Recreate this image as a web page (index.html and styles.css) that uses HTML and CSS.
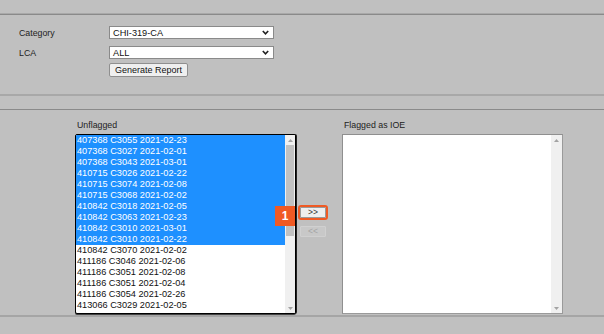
FILE: index.html
```html
<!DOCTYPE html>
<html lang="en">
<head>
<meta charset="utf-8">
<title>IOE Report</title>
<link rel="stylesheet" href="styles.css">
</head>
<body>
<div class="page">
  <div class="rule-top"></div>
  <form class="filters">
    <div class="f-row">
      <label class="f-label">Category</label>
      <div class="select"><span>CHI-319-CA</span><svg class="chev" width="7" height="5" viewBox="0 0 7 5"><path d="M0.8 1 L3.5 3.8 L6.2 1" fill="none" stroke="#222" stroke-width="1.6"/></svg></div>
    </div>
    <div class="f-row">
      <label class="f-label">LCA</label>
      <div class="select"><span>ALL</span><svg class="chev" width="7" height="5" viewBox="0 0 7 5"><path d="M0.8 1 L3.5 3.8 L6.2 1" fill="none" stroke="#222" stroke-width="1.6"/></svg></div>
    </div>
    <div class="btn-row"><button type="button" class="btn-generate">Generate Report</button></div>
  </form>
  <div class="rule-mid"></div>
  <div class="rule-thin"></div>
  <section class="transfer">
    <div class="col">
      <div class="col-label">Unflagged</div>
      <div class="listbox focused">
        <ul class="options">
          <li class="sel">407368 C3055 2021-02-23</li>
          <li class="sel">407368 C3027 2021-02-01</li>
          <li class="sel">407368 C3043 2021-03-01</li>
          <li class="sel">410715 C3026 2021-02-22</li>
          <li class="sel">410715 C3074 2021-02-08</li>
          <li class="sel">410715 C3068 2021-02-02</li>
          <li class="sel">410842 C3018 2021-02-05</li>
          <li class="sel">410842 C3063 2021-02-23</li>
          <li class="sel">410842 C3010 2021-03-01</li>
          <li class="sel">410842 C3010 2021-02-22</li>
          <li>410842 C3070 2021-02-02</li>
          <li>411186 C3046 2021-02-06</li>
          <li>411186 C3051 2021-02-08</li>
          <li>411186 C3051 2021-02-04</li>
          <li>411186 C3054 2021-02-26</li>
          <li>413066 C3029 2021-02-05</li>
        </ul>
        <div class="scrollbar">
          <div class="arrow"><svg width="5" height="3" viewBox="0 0 5 3"><path d="M0 3 L2.5 0 L5 3Z" fill="#a3a3a3"/></svg></div>
          <div class="thumb"></div>
          <div class="track"></div>
          <div class="arrow"><svg width="5" height="3" viewBox="0 0 5 3"><path d="M0 0 L2.5 3 L5 0Z" fill="#a3a3a3"/></svg></div>
        </div>
      </div>
    </div>
    <div class="mover">
      <div class="move-wrap">
        <span class="badge">1</span>
        <button type="button" class="move active">&gt;&gt;</button>
      </div>
      <button type="button" class="move" disabled>&lt;&lt;</button>
    </div>
    <div class="col">
      <div class="col-label">Flagged as IOE</div>
      <div class="listbox plain">
        <ul class="options"></ul>
        <div class="scrollbar wide">
          <div class="arrow"><svg width="5" height="3" viewBox="0 0 5 3"><path d="M0 3 L2.5 0 L5 3Z" fill="#a3a3a3"/></svg></div>
          <div class="track"></div>
          <div class="arrow"><svg width="5" height="3" viewBox="0 0 5 3"><path d="M0 0 L2.5 3 L5 0Z" fill="#a3a3a3"/></svg></div>
        </div>
      </div>
    </div>
  </section>
  <div class="rule-bottom"></div>
</div>
</body>
</html>
```
FILE: styles.css
```css
html, body {
  margin: 0;
  background: #c0c0c0;
  font-family: "Liberation Sans", Arial, sans-serif;
  color: #222;
}
.page {
  padding-top: 13px;
}
.rule-top {
  height: 0;
  border-top: 1px solid #a9a9a9;
  border-bottom: 1px solid #8a8a8a;
}
.filters {
  display: flex;
  flex-direction: column;
  padding: 11px 0 0 19px;
  margin: 0;
}
.f-row {
  display: flex;
  align-items: center;
  height: 13px;
}
.f-row + .f-row {
  margin-top: 7px;
}
.f-label {
  width: 90px;
  font-size: 8.8px;
  color: #222;
}
.select {
  width: 165px;
  height: 13px;
  box-sizing: border-box;
  background: #fff;
  border: 1px solid #8a8a8a;
  display: flex;
  align-items: center;
  justify-content: space-between;
  padding: 0 4px 0 3px;
  font-size: 9.2px;
  color: #111;
}
.chev {
  display: block;
}
.btn-row {
  margin-top: 4px;
  padding-left: 90px;
  display: flex;
}
.btn-generate {
  height: 14px;
  width: 79px;
  box-sizing: border-box;
  padding: 0;
  font-family: "Liberation Sans", Arial, sans-serif;
  font-size: 9px;
  background: #efefef;
  border: 1px solid #8f8f8f;
  border-radius: 2px;
  color: #111;
}
.rule-mid {
  margin-top: 17px;
  height: 2px;
  background: #a8a8a8;
}
.rule-thin {
  margin-top: 13px;
  height: 1px;
  background: #8a8a8a;
}
.transfer {
  display: flex;
  padding: 10px 0 0 75px;
}
.col {
  display: flex;
  flex-direction: column;
}
.col-label {
  font-size: 8.8px;
  line-height: 11px;
  height: 11px;
  margin-bottom: 3px;
  padding-left: 2px;
  color: #222;
}
.listbox {
  width: 221px;
  height: 180px;
  box-sizing: border-box;
  display: flex;
  background: #fff;
  overflow: hidden;
}
.listbox.focused {
  border: 1px solid #000;
  border-radius: 2px;
  box-shadow: 1px 0 0 #222, 0 1px 0 #444;
}
.listbox.plain {
  border: 1px solid #9a9a9a;
  border-top-color: #8f8f8f;
  border-left-color: #8f8f8f;
}
.options {
  list-style: none;
  margin: 0;
  padding: 0;
  flex: 1;
  overflow: hidden;
  font-size: 9.2px;
  line-height: 11px;
}
.options li {
  height: 11px;
  padding-left: 1px;
  white-space: nowrap;
  color: #111;
}
.options li.sel {
  background: #1e90ff;
  color: #fff;
}
.scrollbar {
  width: 10px;
  background: #f0f0f0;
  display: flex;
  flex-direction: column;
}
.scrollbar.wide {
  width: 11px;
}
.arrow {
  height: 10px;
  display: flex;
  align-items: center;
  justify-content: center;
}
.arrow svg {
  display: block;
}
.thumb {
  height: 91px;
  background: #c1c1c1;
  margin: 0 1px;
}
.track {
  flex: 1;
}
.mover {
  width: 46px;
  display: flex;
  flex-direction: column;
  align-items: flex-start;
  padding: 87px 0 0 4px;
  box-sizing: border-box;
}
.move-wrap {
  position: relative;
  display: flex;
}
.move {
  width: 26px;
  height: 11px;
  box-sizing: border-box;
  padding: 0;
  font-family: "Liberation Sans", Arial, sans-serif;
  font-size: 8.5px;
  line-height: 9px;
  background: #efefef;
  border: 1px solid #9a9a9a;
  border-radius: 1px;
  color: #333;
}
.move.active {
  outline: 2px solid #f05a24;
}
.move:disabled {
  margin-top: 8px;
  background: #c8c8c8;
  border-color: #d0d0d0;
  color: #a4a4a4;
}
.badge {
  position: absolute;
  left: -25px;
  top: -1px;
  width: 20px;
  height: 20px;
  background: #f05a24;
  color: #fff;
  font-weight: bold;
  font-size: 12px;
  line-height: 20px;
  text-align: center;
}
.rule-bottom {
  margin-top: 1px;
  height: 2px;
  background: #a5a5a5;
}
```
